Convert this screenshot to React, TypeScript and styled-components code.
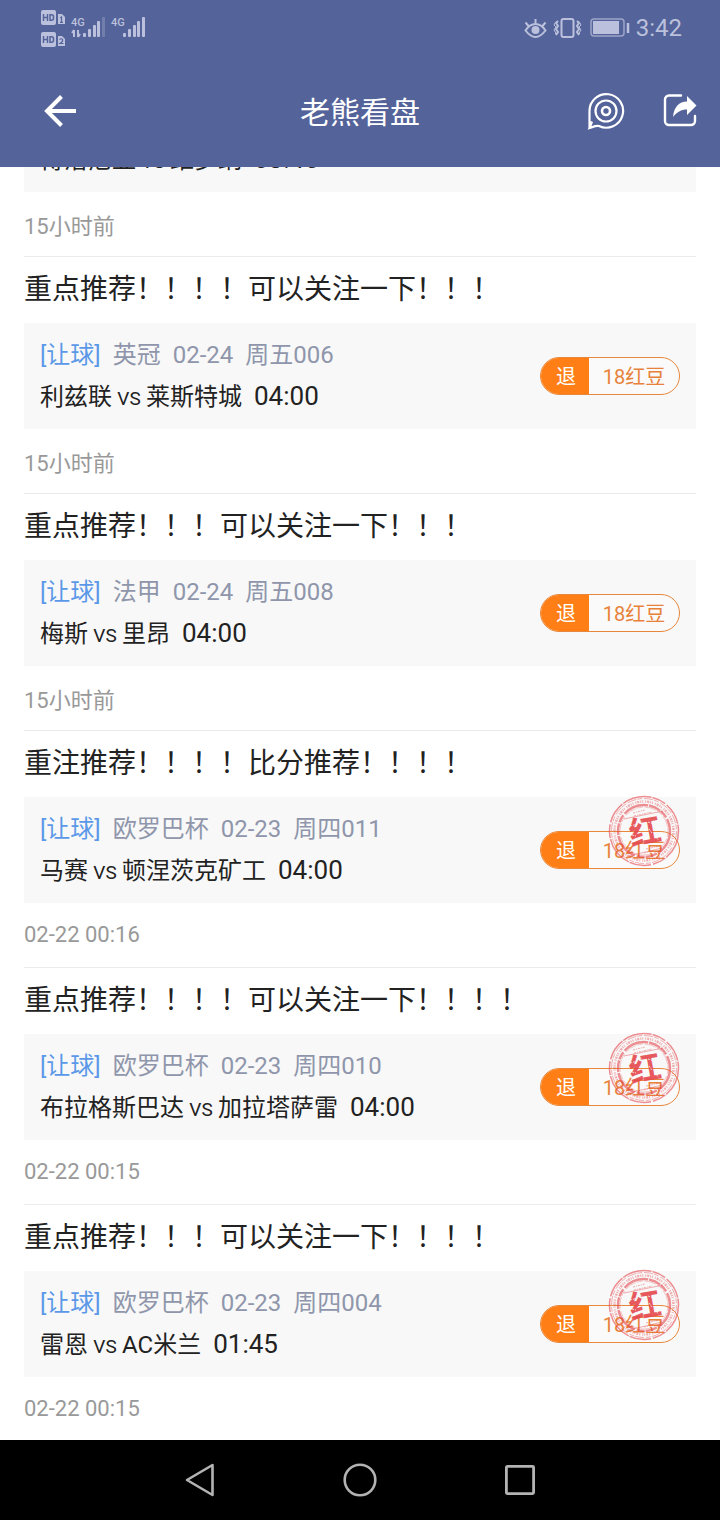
import React from "react";
import styled, { createGlobalStyle } from "styled-components";

const GlobalStyle = createGlobalStyle`
  *, *::before, *::after { box-sizing: border-box; }
  body {
    margin: 0;
    background: #fff;
    color: #222;
    font-family: Roboto, "Noto Sans CJK SC", sans-serif;
  }
  button { font: inherit; }
`;

const Page = styled.div`
  display: flex;
  flex-direction: column;
  height: 100vh;
`;

const Header = styled.header`
  flex: none;
  background: #546399;
  color: #fff;
`;

const StatusBar = styled.div`
  display: flex;
  justify-content: space-between;
  align-items: center;
  height: 56px;
  padding: 0 38px 0 40px;
  color: #bbc1dc;
`;

const StatusGroup = styled.div`
  display: flex;
  align-items: center;
  gap: 6px;
  font-size: 24px;
  line-height: 56px;
`;

const TitleBar = styled.div`
  display: grid;
  grid-template-columns: 1fr auto 1fr;
  align-items: center;
  height: 110px;
  margin-bottom: 1px;
  padding: 0 22px;
`;

const Title = styled.h1`
  margin: 0;
  padding-top: 4px;
  font-size: 30px;
  line-height: 48px;
  font-weight: 400;
`;

const Actions = styled.div`
  display: flex;
  justify-content: flex-end;
  gap: 37px;
`;

const IconButton = styled.button`
  display: flex;
  justify-self: start;
  padding: 0;
  border: 0;
  background: none;
  color: #fff;
  cursor: pointer;
`;

const BackButton = styled(IconButton)`
  margin-left: 20px;
`;

const Feed = styled.main`
  flex: 1 1 0;
  min-height: 0;
  overflow: hidden;
  padding: 0 24px;
`;

const List = styled.div`
  margin-top: -148px;
`;

const Item = styled.article`
  border-top: 1px solid #ececec;
`;

const Headline = styled.h2`
  margin: 0;
  padding: 11px 0;
  font-size: 28px;
  line-height: 44px;
  font-weight: 400;
`;

const Panel = styled.div`
  display: flex;
  justify-content: space-between;
  align-items: center;
  padding: 12px 16px;
  background: #f8f8f8;
`;

const Meta = styled.div`
  display: flex;
  gap: 12px;
  font-size: 24px;
  line-height: 40px;
  color: #8f96ab;
`;

const Kind = styled.span`
  color: #5c98e8;
`;

const Match = styled.div`
  display: flex;
  align-items: baseline;
  height: 42px;
  font-size: 24px;
  line-height: 42px;
`;

const Versus = styled.span`
  width: 34px;
  text-align: center;
  font-size: 19px;
`;

const Kickoff = styled.time`
  margin-left: 12px;
  font-size: 26px;
`;

const PriceBox = styled.div`
  position: relative;
  flex: none;
`;

const Pill = styled.button`
  display: flex;
  width: 140px;
  height: 38px;
  padding: 0;
  overflow: hidden;
  border: 1px solid #e8883c;
  border-radius: 19px;
  background: #fafafa;
  font-size: 20px;
  line-height: 38px;
  color: #e8823a;
  cursor: pointer;
`;

const Refund = styled.span`
  width: 48px;
  padding-left: 2px;
  background: #ff7f16;
  color: #fff;
`;

const Price = styled.span`
  flex: 1;
`;

const StampMark = styled.svg`
  position: absolute;
  right: 0;
  top: -36px;
  pointer-events: none;
`;

const Posted = styled.div<{ $relative: boolean }>`
  padding: ${(p) => (p.$relative ? "15px 0 9px" : "12px 0")};
  font-size: 22px;
  line-height: 40px;
  color: #999;
`;

const SystemNav = styled.nav`
  flex: none;
  display: flex;
  justify-content: center;
  background: #000;
`;

const NavButton = styled.button`
  display: flex;
  justify-content: center;
  align-items: center;
  width: 160px;
  height: 80px;
  padding: 0;
  border: 0;
  background: none;
  cursor: pointer;
`;

function SignalIcons() {
  const bars = [4, 8, 12, 16, 20];
  return (
    <svg width="108" height="40" viewBox="0 -2 108 40" fill="currentColor" aria-hidden="true">
      {[0, 22].map((y) => (
        <g key={y} transform={`translate(0 ${y})`}>
          <rect x="1" y="0" width="15" height="15" rx="2" />
          <path d="M18 4h4l3 3v7h-7z" />
        </g>
      ))}
      <g fill="none" stroke="#546399" strokeWidth="1.500">
        <path d="M3.500 4v7M7.500 4v7M3.500 7.500h4M10 4v7M10 4.700h1.500q2 0 2 2v1.600q0 2-2 2H10" />
        <path d="M3.500 26v7M7.500 26v7M3.500 29.500h4M10 26v7M10 26.700h1.500q2 0 2 2v1.600q0 2-2 2H10" />
        <path d="M20.300 8l1.200-1v5M20 12.300h3M19.500 29.500q2-1.500 3 0t-2.500 4h3.500" strokeWidth="1.200" />
      </g>
      <text x="31" y="16" fontSize="11" fontWeight="500">4G</text>
      <text x="71" y="16" fontSize="11" fontWeight="500">4G</text>
      <path d="M34 20v7M38 20v7M32 23l2-3M38 27l2-3" stroke="currentColor" strokeWidth="2" fill="none" />
      {bars.map((h, i) => (
        <rect key={h} x={43 + i * 5 - (i > 2 ? 1 : 0)} y={27 - h} width="3" height={h} rx="1" opacity={i === 4 ? 0.3 : 1} />
      ))}
      {bars.map((h, i) => (
        <rect key={h} x={83 + i * 5 - (i > 2 ? 1 : 0)} y={27 - h} width="3" height={h} rx="1" />
      ))}
    </svg>
  );
}

function DeviceIcons() {
  return (
    <svg width="106" height="24" viewBox="0 0 106 24" fill="none" stroke="currentColor" strokeWidth="2" aria-hidden="true">
      <path d="M1.500 14.500C5 9 8 8 11.500 8s6.500 1 10 6.500C18 19 15 21 11.500 21S5 19 1.500 14.500zM11.500 8V3M4.500 10 1.500 6.500M18.500 10l3-3.500" />
      <circle cx="11.500" cy="14" r="4" fill="currentColor" stroke="none" />
      <rect x="37.500" y="3" width="12" height="18" rx="2" />
      <path d="m34 5-2 2 2 3-2 3 2 3-2 3M53 5l2 2-2 3 2 3-2 3 2 3" />
      <path d="m31 7-1 2 2 2-2 3 2 3-1 1M56 7l1 2-2 2 2 3-2 3 1 1" strokeWidth="1" />
      <rect x="67" y="3" width="33" height="17" rx="3" strokeWidth="1.500" opacity="0.700" />
      <rect x="69" y="5" width="26" height="13" fill="currentColor" stroke="none" />
      <path d="M104 7v10" strokeWidth="2.500" />
    </svg>
  );
}

function BackIcon() {
  return (
    <svg width="36" height="36" viewBox="0 0 36 36" fill="none" stroke="currentColor" strokeWidth="4" aria-hidden="true">
      <path d="M34 18H5M19.500 3.500 5 18l14.500 14.500" />
    </svg>
  );
}

function LiveIcon() {
  return (
    <svg width="38" height="38" viewBox="0 0 38 38" fill="none" stroke="currentColor" strokeWidth="2.200" aria-hidden="true">
      <path d="M2.500 36V19A16.800 16.800 0 1 1 12 34C8 33.500 6 35 2.500 36L5 29.500" />
      <circle cx="19" cy="19" r="10.500" />
      <circle cx="19" cy="19" r="4" strokeWidth="2.600" />
    </svg>
  );
}

function ShareIcon() {
  return (
    <svg width="36" height="36" viewBox="0 0 36 36" fill="none" stroke="currentColor" strokeWidth="2.400" aria-hidden="true">
      <path d="M19 3.500H7a4 4 0 0 0-4 4V29a4 4 0 0 0 4 4h22a4 4 0 0 0 4-4v-5" strokeLinecap="round" />
      <path d="M11 25C12 15 17 9.500 25 9.500V4l9.500 9.500L25 23v-5.500C19 17.500 15 20 11 25z" fill="currentColor" stroke="none" />
    </svg>
  );
}

function Stamp() {
  return (
    <StampMark width="72" height="72" viewBox="0 0 72 72" fill="none" stroke="#e5484d" role="img" aria-label="红">
      <g opacity="0.600">
        <circle cx="36" cy="36" r="34.500" strokeWidth="1.500" strokeDasharray="30 1 14 2 22 1" />
        <circle cx="36" cy="36" r="32.500" strokeWidth="0.700" strokeDasharray="9 1 5 2" />
        <circle cx="36" cy="36" r="29.500" strokeWidth="2.400" strokeDasharray="1 1 2 1 1 1 1 2" opacity="0.700" />
        <circle cx="36" cy="36" r="26" strokeWidth="2.400" strokeDasharray="26 1 12 1 8 2" />
        <circle cx="36" cy="36" r="24" strokeWidth="0.500" strokeDasharray="6 2 12 1" />
      </g>
      <g opacity="0.550" strokeWidth="0.800">
        <path d="m16 24 39-8M21 61l33-8" />
        <path d="m25 18 12-3M26 21l18-4M38 54l14-3M36 58l10-2" strokeDasharray="2 1 1 1" />
      </g>
      <text x="37" y="48" textAnchor="middle" fontSize="32" fontWeight="700" fill="#e5484d" stroke="none" opacity="0.900" transform="rotate(-10 36 36)">红</text>
      <path d="m22 31 8-2M40 27l9 3M28 44l5-2M46 41l5 4M24 40l4 1M31 25l3 2M41 34l3 4" stroke="#f7f7f7" strokeWidth="0.800" strokeDasharray="2 1" />
    </StampMark>
  );
}

interface Tip {
  headline: string;
  league: string;
  date: string;
  round: string;
  home: string;
  away: string;
  kickoff: string;
  posted: string;
  won?: boolean;
}

const tips: Tip[] = [
  { headline: "重点推荐！！！可以关注一下！！！", league: "意甲", date: "02-24", round: "周五007", home: "博洛尼亚", away: "维罗纳", kickoff: "03:45", posted: "15小时前" },
  { headline: "重点推荐！！！！可以关注一下！！！", league: "英冠", date: "02-24", round: "周五006", home: "利兹联", away: "莱斯特城", kickoff: "04:00", posted: "15小时前" },
  { headline: "重点推荐！！！可以关注一下！！！", league: "法甲", date: "02-24", round: "周五008", home: "梅斯", away: "里昂", kickoff: "04:00", posted: "15小时前" },
  { headline: "重注推荐！！！！比分推荐！！！！", league: "欧罗巴杯", date: "02-23", round: "周四011", home: "马赛", away: "顿涅茨克矿工", kickoff: "04:00", posted: "02-22 00:16", won: true },
  { headline: "重点推荐！！！！可以关注一下！！！！", league: "欧罗巴杯", date: "02-23", round: "周四010", home: "布拉格斯巴达", away: "加拉塔萨雷", kickoff: "04:00", posted: "02-22 00:15", won: true },
  { headline: "重点推荐！！！可以关注一下！！！！", league: "欧罗巴杯", date: "02-23", round: "周四004", home: "雷恩", away: "AC米兰", kickoff: "01:45", posted: "02-22 00:15", won: true },
];

function TipItem({ tip }: { tip: Tip }) {
  return (
    <Item>
      <Headline>{tip.headline}</Headline>
      <Panel>
        <div>
          <Meta>
            <Kind>[让球]</Kind>
            <span>{tip.league}</span>
            <span>{tip.date}</span>
            <span>{tip.round}</span>
          </Meta>
          <Match>
            <span>{tip.home}</span>
            <Versus>VS</Versus>
            <span>{tip.away}</span>
            <Kickoff>{tip.kickoff}</Kickoff>
          </Match>
        </div>
        <PriceBox>
          <Pill type="button">
            <Refund>退</Refund>
            <Price>18红豆</Price>
          </Pill>
          {tip.won && <Stamp />}
        </PriceBox>
      </Panel>
      <Posted $relative={tip.posted.endsWith("前")}>{tip.posted}</Posted>
    </Item>
  );
}

export default function App() {
  return (
    <Page>
      <GlobalStyle />
      <Header>
        <StatusBar>
          <SignalIcons />
          <StatusGroup>
            <DeviceIcons />
            <span>3:42</span>
          </StatusGroup>
        </StatusBar>
        <TitleBar>
          <BackButton type="button" aria-label="返回"><BackIcon /></BackButton>
          <Title>老熊看盘</Title>
          <Actions>
            <IconButton type="button" aria-label="直播"><LiveIcon /></IconButton>
            <IconButton type="button" aria-label="分享"><ShareIcon /></IconButton>
          </Actions>
        </TitleBar>
      </Header>
      <Feed>
        <List>
          {tips.map((tip) => <TipItem key={tip.round} tip={tip} />)}
        </List>
      </Feed>
      <SystemNav>
        <NavButton type="button" aria-label="后退">
          <svg width="32" height="36" viewBox="0 0 32 36" fill="none" stroke="#b3b3b3" strokeWidth="2.600" strokeLinejoin="round">
            <path d="M28.500 3v30L3 18z" />
          </svg>
        </NavButton>
        <NavButton type="button" aria-label="主屏幕">
          <svg width="36" height="36" viewBox="0 0 36 36" fill="none" stroke="#b3b3b3" strokeWidth="2.600">
            <circle cx="18" cy="18" r="15.300" />
          </svg>
        </NavButton>
        <NavButton type="button" aria-label="最近任务">
          <svg width="32" height="32" viewBox="0 0 32 32" fill="none" stroke="#b3b3b3" strokeWidth="2.800">
            <rect x="2.400" y="2.400" width="27.200" height="27.200" rx="1" />
          </svg>
        </NavButton>
      </SystemNav>
    </Page>
  );
}
